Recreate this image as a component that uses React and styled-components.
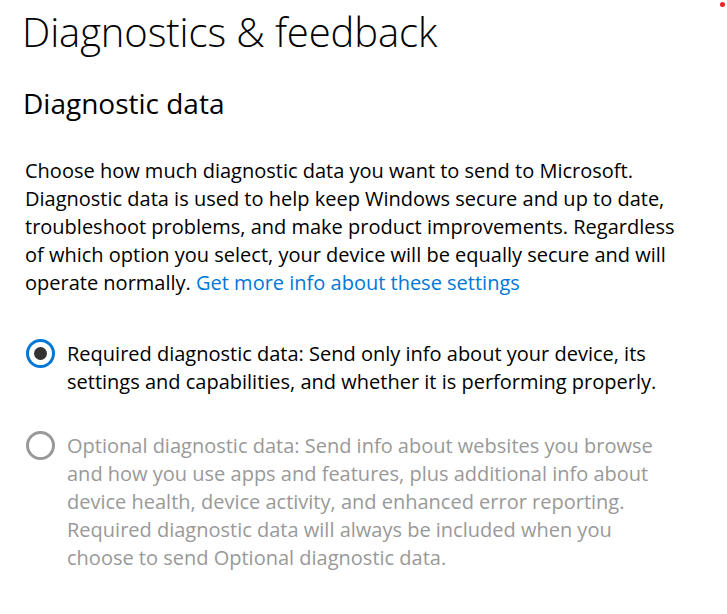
import React from "react";
import styled, { createGlobalStyle } from "styled-components";

const Global = createGlobalStyle`
  html, body { margin: 0; padding: 0; background: #fff; }
  body { font-family: "Open Sans", "Noto Sans", sans-serif; color: #000; }
`;

const Page = styled.div`
  position: relative;
  width: 727px;
  height: 614px;
  overflow: hidden;
  padding: 4px 0 0 22px;
  box-sizing: border-box;
`;

const Title = styled.h1`
  margin: 0;
  font-weight: 300;
  font-size: 40px;
  line-height: 56px;
  letter-spacing: -0.1px;
`;

const Subtitle = styled.h2`
  margin: 25px 0 0 1px;
  font-weight: 400;
  font-size: 28px;
  line-height: 36px;
`;

const Body = styled.p`
  margin: 36px 0 0 3px;
  width: 655px;
  font-size: 20px;
  line-height: 28px;
`;

const Link = styled.a`
  color: #0078d7;
  text-decoration: none;
`;

const Options = styled.div`
  margin: 43px 0 0 4px;
  display: flex;
  flex-direction: column;
  gap: 36px;
`;

const Option = styled.label`
  display: flex;
  align-items: flex-start;
  gap: 12px;
  color: ${({ disabled }) => (disabled ? "#999" : "#000")};
  font-size: 20px;
  line-height: 28px;
`;

const Radio = styled.span`
  flex: none;
  width: 29px;
  height: 29px;
  box-sizing: border-box;
  border-radius: 50%;
  border: 3px solid ${({ checked, disabled }) => (disabled ? "#999" : checked ? "#0078d7" : "#333")};
  display: flex;
  align-items: center;
  justify-content: center;
  margin-top: -1px;
  &::after {
    content: "";
    width: 13px;
    height: 13px;
    border-radius: 50%;
    background: #333;
    display: ${({ checked }) => (checked ? "block" : "none")};
  }
`;

const OptionText = styled.span`
  width: 595px;
`;

const Dot = styled.span`
  position: absolute;
  top: 2px;
  right: 2px;
  width: 5px;
  height: 5px;
  border-radius: 50%;
  background: #e8232a;
`;

export default function App() {
  return (
    <Page>
      <Global />
      <Dot />
      <Title>Diagnostics &amp; feedback</Title>
      <Subtitle>Diagnostic data</Subtitle>
      <Body>
        Choose how much diagnostic data you want to send to Microsoft.
        Diagnostic data is used to help keep Windows secure and up to date,
        troubleshoot problems, and make product improvements. Regardless of
        which option you select, your device will be equally secure and will
        operate normally. <Link href="#">Get more info about these settings</Link>
      </Body>
      <Options>
        <Option>
          <Radio checked />
          <OptionText>
            Required diagnostic data: Send only info about your device, its
            settings and capabilities, and whether it is performing properly.
          </OptionText>
        </Option>
        <Option disabled>
          <Radio disabled />
          <OptionText>
            Optional diagnostic data: Send info about websites you browse and
            how you use apps and features, plus additional info about device
            health, device activity, and enhanced error reporting. Required
            diagnostic data will always be included when you choose to send
            Optional diagnostic data.
          </OptionText>
        </Option>
      </Options>
    </Page>
  );
}
